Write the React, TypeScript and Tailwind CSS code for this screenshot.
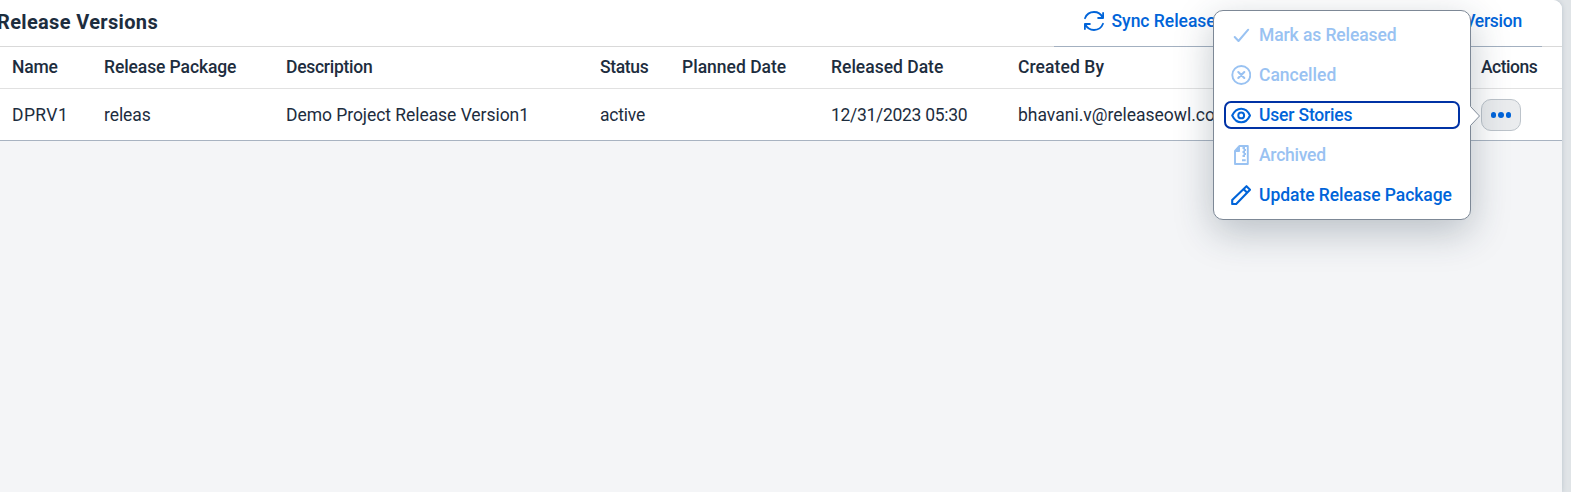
import type { ReactNode } from "react";

const columns = "grid grid-cols-[92px_182px_314px_82px_149px_187px_463px_1fr] pl-3";

function SyncIcon() {
  return (
    <svg viewBox="0 0 20 20" className="size-5 shrink-0" fill="none" stroke="currentColor" strokeWidth="1.8" strokeLinecap="round" strokeLinejoin="round">
      <path d="M1 7.2C2.400 3.500 6 1 10 1c3.700 0 7 2 8.500 5.300M19.100 2v5h-5M19 12.800C17.600 16.500 14 19 10 19c-3.700 0-7-2-8.500-5.300M.9 18v-5h5" />
    </svg>
  );
}

function CheckIcon() {
  return (
    <svg viewBox="0 0 20 20" className="size-5" fill="none" stroke="currentColor" strokeWidth="2" strokeLinecap="round" strokeLinejoin="round">
      <path d="M3.700 12 7.500 16 17.200 4.700" />
    </svg>
  );
}

function CancelIcon() {
  return (
    <svg viewBox="0 0 20 20" className="size-5" fill="none" stroke="currentColor" strokeWidth="1.9" strokeLinecap="round">
      <circle cx="10.300" cy="10" r="9" />
      <path d="m7.300 7 6 6M13.300 7l-6 6" strokeWidth="2.100" />
    </svg>
  );
}

function EyeIcon() {
  return (
    <svg viewBox="0 0 20 20" className="size-5" fill="none" stroke="currentColor" strokeWidth="2" strokeLinejoin="round">
      <path d="M1.200 10.500C3.200 6.300 6.400 3.700 10.200 3.700s6.900 2.600 8.800 6.800c-1.900 4.200-5 6.800-8.800 6.800s-7-2.600-9-6.800Z" />
      <circle cx="10.200" cy="10.400" r="2.900" />
    </svg>
  );
}

function ArchiveIcon() {
  return (
    <svg viewBox="0 0 20 20" className="size-5" fill="none" stroke="currentColor" strokeWidth="1.9" strokeLinejoin="round">
      <path d="M8.500 1h8.300v18H4V5.800L8.500 1Z" />
      <path d="M8.500 1v5.500H4Z" fill="currentColor" strokeWidth="1" />
      <path d="M11.500 3h2.500M12.500 5H15M11.500 7h2.500M12.500 9H15M11.500 11h2.500M11 15.300h3.700" strokeWidth="2" />
    </svg>
  );
}

function PencilIcon() {
  return (
    <svg viewBox="0 0 20 20" className="size-5" fill="none" stroke="currentColor" strokeWidth="2.100" strokeLinejoin="round">
      <path d="M1.200 19v-4L15.500 1.200 19 4.700 5.200 19h-4ZM12.700 4.200l3.500 3.500" />
    </svg>
  );
}

function MenuItem({ icon, disabled, focused, children }: { icon: ReactNode; disabled?: boolean; focused?: boolean; children: ReactNode }) {
  return (
    <button
      disabled={disabled}
      className={`flex h-7 w-[236px] items-center gap-2 rounded-[7px] border-2 pl-[5px] text-left font-medium whitespace-nowrap ${
        focused ? "border-[#0032a5]" : "border-transparent"
      } ${disabled ? "text-[#99c2f2]" : "text-[#0064d9]"}`}
    >
      {icon}
      {children}
    </button>
  );
}

export default function App() {
  return (
    <div className="relative h-[492px] w-full overflow-hidden bg-[#e0e4e7] font-['Roboto','Liberation_Sans',sans-serif] text-[17.5px] leading-[22px] text-[#1d2d3e]">
      <main className="h-full w-[1562px] overflow-hidden rounded-tr-[9px] bg-[#f4f5f7] shadow-[0_0_5px_#b9c3cc]">
        <header className="flex h-[47px] justify-between border-b border-[#d9d9d9] bg-white">
          <h1 className="-ml-[3px] pt-[9px] text-[20px] leading-[26px] font-bold whitespace-nowrap"><span className="tracking-[0.34px]">Release Versions</span></h1>
          <div className="mr-5 flex h-[47px] w-[488px] justify-between border-b border-[#a3b0c0] pt-[10px] pr-5 pl-[30px] font-medium text-[#0064d9]">
            <div className="flex h-[22px] items-center gap-[7.500px]">
              <SyncIcon />
              <span className="tracking-[-0.02px]">Sync Release</span>
            </div>
            <span className="tracking-[-0.25px]">Version</span>
          </div>
        </header>
        <div className={`${columns} h-[42px] items-center border-b border-[#e1e1e1] bg-white pb-[2px] font-medium whitespace-nowrap`}>
          <div><span className="tracking-[-0.2px]">Name</span></div>
          <div><span className="tracking-[-0.1px]">Release Package</span></div>
          <div><span className="tracking-[-0.27px]">Description</span></div>
          <div><span className="tracking-[-0.35px]">Status</span></div>
          <div><span className="tracking-[0px]">Planned Date</span></div>
          <div><span className="tracking-[0px]">Released Date</span></div>
          <div><span className="tracking-[0.08px]">Created By</span></div>
          <div><span className="tracking-[-0.5px]">Actions</span></div>
        </div>
        <div className={`${columns} h-[52px] items-center border-b border-[#a8b3c1] bg-white whitespace-nowrap`}>
          <div><span className="tracking-[0.4px]">DPRV1</span></div>
          <div><span className="tracking-[-0.08px]">releas</span></div>
          <div><span className="tracking-[-0.05px]">Demo Project Release Version1</span></div>
          <div><span className="tracking-[-0.2px]">active</span></div>
          <div />
          <div><span className="tracking-[-0.3px]">12/31/2023 05:30</span></div>
          <div><span className="tracking-[0px]">bhavani.v@releaseowl.co</span></div>
          <button className="flex h-8 w-10 items-center justify-center gap-[2px] rounded-[10px] border border-[#bcc3ca] bg-[#eaecee] pt-px">
            <span className="size-[5.500px] rounded-full bg-[#0064d9]" />
            <span className="size-[5.500px] rounded-full bg-[#0064d9]" />
            <span className="size-[5.500px] rounded-full bg-[#0064d9]" />
          </button>
        </div>
      </main>
      <div className="absolute top-[10px] left-[1213px] flex h-[210px] w-[258px] flex-col gap-3 rounded-[10px] border border-[#7d8896] bg-white pt-[10px] pl-[10px] shadow-[0_12px_38px_rgba(34,53,72,0.28)]">
        <MenuItem icon={<CheckIcon />} disabled><span className="tracking-[-0.1px]">Mark as Released</span></MenuItem>
        <MenuItem icon={<CancelIcon />} disabled><span className="tracking-[0px]">Cancelled</span></MenuItem>
        <MenuItem icon={<EyeIcon />} focused><span className="tracking-[-0.18px]">User Stories</span></MenuItem>
        <MenuItem icon={<ArchiveIcon />} disabled><span className="tracking-[-0.25px]">Archived</span></MenuItem>
        <MenuItem icon={<PencilIcon />}><span className="tracking-[-0.05px]">Update Release Package</span></MenuItem>
        <svg viewBox="0 0 10 20" className="absolute top-[95px] left-[256px] h-5 w-[10px]">
          <path d="M0 0 10 10 0 20Z" fill="white" />
          <path d="M.5.5 9.500 10 .5 19.500" fill="none" stroke="#7d8896" />
        </svg>
      </div>
    </div>
  );
}
